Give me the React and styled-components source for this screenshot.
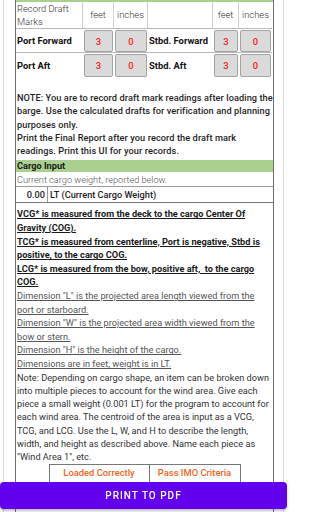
import React from 'react';
import styled, { createGlobalStyle } from 'styled-components';

const GlobalStyle = createGlobalStyle`
  html, body {
    margin: 0;
    padding: 0;
    background: #ffffff;
    font-family: Roboto, "Liberation Sans", sans-serif;
    color: #222;
  }
  * { box-sizing: border-box; }
`;

const TEXT = '9.2px';

const Page = styled.div`
  width: 288px;
  padding: 0 4px 0 3px;
  height: 512px;
  overflow: hidden;
`;

const Frame = styled.div`
  border-left: 1px solid #dcdcdc;
  border-right: 1px solid #dcdcdc;
  padding: 0 9px 0 11px;
  min-height: 512px;
`;

const Panel = styled.div`
  border-left: 1px solid #6f6f6f;
  border-right: 1px solid #6f6f6f;
  min-height: 512px;
`;

const GreenStrip = styled.div`
  height: 2px;
  background: #a9d08e;
`;

const DraftGrid = styled.div`
  display: grid;
  grid-template-columns: 67px 31px 34px 65px 26px 33px;
  grid-template-rows: 27px 24px 24px;
`;

const HeadCell = styled.div`
  display: flex;
  align-items: center;
  justify-content: ${p => (p.$left ? 'flex-start' : 'center')};
  padding-left: ${p => (p.$left ? '1px' : '0')};
  font-size: 9.4px;
  line-height: 13.5px;
  font-weight: 300;
  color: #333;
  border-right: ${p => (p.$last ? 'none' : '1px solid #d0d0d0')};
  border-bottom: 1px solid #b8b8b8;
`;

const LabelCell = styled.div`
  display: flex;
  align-items: center;
  padding-left: 1px;
  font-size: 9.4px;
  font-weight: 700;
  color: #111;
  border-bottom: ${p => (p.$last ? 'none' : '1px solid #b8b8b8')};
`;

const InputCell = styled.div`
  padding: 1px 1px 0 1px;
  border-bottom: ${p => (p.$last ? 'none' : '1px solid #b8b8b8')};
`;

const DraftBox = styled.div`
  height: 100%;
  background: #dadada;
  border: 1px solid #a3a3a3;
  border-radius: 2px;
  display: flex;
  align-items: center;
  justify-content: center;
  font-size: 9.4px;
  font-weight: 500;
  color: #ff1a1a;
`;

const Note = styled.p`
  margin: 14px 0 0 0;
  padding-left: 1px;
  font-size: ${TEXT};
  line-height: 13.3px;
  font-weight: 500;
  letter-spacing: 0.08px;
  color: #1e1e1e;
`;

const SectionHead = styled.div`
  margin-top: 3px;
  height: 12px;
  background: #a9d08e;
  padding-left: 1px;
  font-size: ${TEXT};
  line-height: 12px;
  font-weight: 700;
  color: #1a1a1a;
`;

const InfoRow = styled.div`
  height: 15px;
  padding-left: 1px;
  font-size: ${TEXT};
  line-height: 15px;
  font-weight: 300;
  color: #555;
  border-bottom: 1px solid #9a9a9a;
`;

const WeightRow = styled.div`
  display: flex;
  height: 16px;
  border-bottom: 1px solid #777;
  font-size: ${TEXT};
  line-height: 15px;
  font-weight: 500;
  color: #222;
`;

const WeightValue = styled.div`
  width: 32px;
  text-align: right;
  padding-right: 2px;
  border-right: 1px solid #9a9a9a;
`;

const WeightUnit = styled.div`
  padding-left: 2px;
`;

const Rules = styled.div`
  padding: 4px 0 0 1px;
`;

const Rule = styled.div`
  font-size: ${TEXT};
  line-height: 13.6px;
  font-weight: ${p => (p.$strong ? 700 : 400)};
  color: ${p => (p.$strong ? '#1a1a1a' : '#555')};
  text-decoration: underline;
`;

const Body = styled.p`
  margin: 0;
  font-size: ${TEXT};
  line-height: 13.25px;
  font-weight: 400;
  color: #333;
`;

const StatusRow = styled.div`
  display: flex;
  justify-content: center;
  margin-top: 1px;
`;

const Status = styled.div`
  width: ${p => p.$w}px;
  height: 22px;
  border: 1px solid #777;
  border-left-width: ${p => (p.$first ? '1px' : '0')};
  display: flex;
  align-items: flex-start;
  justify-content: center;
  padding-top: 2px;
  font-size: 9.4px;
  font-weight: 500;
  color: #f0641e;
`;

const PrintButton = styled.button`
  position: fixed;
  left: 0;
  width: 287px;
  bottom: 3px;
  height: 27px;
  border: none;
  border-radius: 4px;
  background: #6200ee;
  color: #fff;
  font-family: Roboto, "Liberation Sans", sans-serif;
  font-size: 10px;
  font-weight: 500;
  letter-spacing: 1px;
  box-shadow: 0 2px 3px rgba(0, 0, 0, 0.25);
`;

const rows = [
  { a: 'Port Forward', b: 'Stbd. Forward' },
  { a: 'Port Aft', b: 'Stbd. Aft', last: true },
];

export default function App() {
  return (
    <>
      <GlobalStyle />
      <Page>
        <Frame>
          <Panel>
            <GreenStrip />
            <DraftGrid>
              <HeadCell $left>Record Draft<br />Marks</HeadCell>
              <HeadCell>feet</HeadCell>
              <HeadCell>inches</HeadCell>
              <HeadCell />
              <HeadCell>feet</HeadCell>
              <HeadCell $last>inches</HeadCell>
              {rows.map(r => (
                <React.Fragment key={r.a}>
                  <LabelCell $last={r.last}>{r.a}</LabelCell>
                  <InputCell $last={r.last}><DraftBox>3</DraftBox></InputCell>
                  <InputCell $last={r.last}><DraftBox>0</DraftBox></InputCell>
                  <LabelCell $last={r.last}>{r.b}</LabelCell>
                  <InputCell $last={r.last}><DraftBox>3</DraftBox></InputCell>
                  <InputCell $last={r.last}><DraftBox>0</DraftBox></InputCell>
                </React.Fragment>
              ))}
            </DraftGrid>

            <Note>
              NOTE: You are to record draft mark readings after loading the barge. Use the calculated drafts for verification and planning purposes only.
              <br />
              Print the Final Report after you record the draft mark readings. Print this UI for your records.
            </Note>

            <SectionHead>Cargo Input</SectionHead>
            <InfoRow>Current cargo weight, reported below.</InfoRow>
            <WeightRow>
              <WeightValue>0.00</WeightValue>
              <WeightUnit>LT (Current Cargo Weight)</WeightUnit>
            </WeightRow>

            <Rules>
              <Rule $strong>VCG* is measured from the deck to the cargo Center Of Gravity (COG).</Rule>
              <Rule $strong>TCG* is measured from centerline, Port is negative, Stbd is positive, to the cargo COG.</Rule>
              <Rule $strong>LCG* is measured from the bow, positive aft,&nbsp; to the cargo COG.</Rule>
              <Rule>Dimension "L" is the projected area length viewed from the port or starboard.</Rule>
              <Rule>Dimension "W" is the projected area width viewed from the bow or stern.</Rule>
              <Rule>Dimension "H" is the height of the cargo.</Rule>
              <Rule>Dimensions are in feet, weight is in LT.</Rule>
              <Body>
                Note: Depending on cargo shape, an item can be broken down into multiple pieces to account for the wind area. Give each piece a small weight (0.001 LT) for the program to account for each wind area. The centroid of the area is input as a VCG, TCG, and LCG. Use the L, W, and H to describe the length, width, and height as described above. Name each piece as "Wind Area 1", etc.
              </Body>
            </Rules>

            <StatusRow>
              <Status $first $w={101}>Loaded Correctly</Status>
              <Status $w={91}>Pass IMO Criteria</Status>
            </StatusRow>
          </Panel>
        </Frame>
      </Page>
      <PrintButton>PRINT TO PDF</PrintButton>
    </>
  );
}
